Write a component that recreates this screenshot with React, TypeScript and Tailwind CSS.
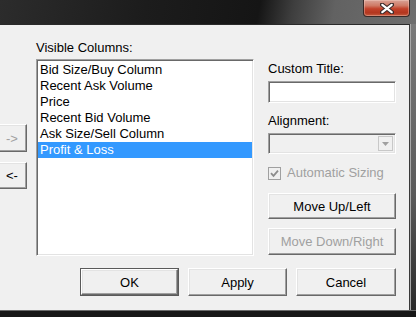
import React from "react";

const items = [
  "Bid Size/Buy Column",
  "Recent Ask Volume",
  "Price",
  "Recent Bid Volume",
  "Ask Size/Sell Column",
  "Profit & Loss",
];

// classic raised 3D button look
const btn =
  "flex items-center justify-center bg-[#f0f0f0] border border-t-white border-l-white border-b-[#696969] border-r-[#696969] shadow-[inset_-1px_-1px_0_#a0a0a0,inset_1px_1px_0_#e3e3e3] text-[13px] leading-none";

const sunken =
  "border border-t-[#a0a0a0] border-l-[#a0a0a0] border-b-white border-r-white shadow-[inset_1px_1px_0_#696969,inset_-1px_-1px_0_#e3e3e3]";

export default function App() {
  return (
    <div
      className="w-[416px] h-[317px] overflow-hidden bg-[#1a1a1a] flex flex-col text-black"
      style={{ fontFamily: '"Liberation Sans", Arial, sans-serif' }}
    >
      {/* Title bar */}
      <div className="h-[24px] flex justify-end items-start pr-[6px] bg-[linear-gradient(100deg,#2c2c2c_0%,#1c1c1c_35%,#151515_62%,#3e3e3e_70%,#626262_80%,#6e6e6e_100%)]">
        <div className="w-[47px] h-[17px] rounded-b-[4px] border border-t-0 border-[#3a2a28] bg-[linear-gradient(180deg,#d9a397_0%,#cf7a66_35%,#c2412a_55%,#b3361f_80%,#c45a3e_100%)] flex items-center justify-center shadow-[inset_0_0_0_1px_rgba(255,220,210,0.35)]">
          <svg width="14" height="11" viewBox="0 0 14 11">
            <path d="M2 1.5 L12 9.5 M12 1.5 L2 9.5" stroke="#3b2a2a" strokeWidth="4.2" strokeLinecap="round" />
            <path d="M2.3 1.8 L11.7 9.2 M11.7 1.8 L2.3 9.2" stroke="#ffffff" strokeWidth="2.2" strokeLinecap="round" />
          </svg>
        </div>
      </div>

      <div className="flex h-[286px]">
        {/* Client area */}
        <div className="w-[410px] h-[286px] bg-[#f0f0f0] border-t border-r border-t-[#2a2a2a] border-r-[#3a3a3a] flex flex-col">
          <div className="flex h-[243px]">
            {/* move buttons */}
            <div className="w-[36px] flex flex-col">
              <div className={`${btn} ml-[-3px] w-[30px] h-[28px] mt-[99px] text-[#a0a0a0]`}>-&gt;</div>
              <div className={`${btn} ml-[-3px] w-[30px] h-[27px] mt-[10px]`}>&lt;-</div>
            </div>

            {/* visible columns list */}
            <div className="w-[218px] flex flex-col pt-[15px]">
              <div className="h-[16px] text-[13px] leading-[16px]">Visible Columns:</div>
              <div className={`${sunken} mt-[3px] h-[197px] bg-white p-[1px] pt-[2px]`}>
                {items.map((t, i) => (
                  <div
                    key={t}
                    className={`h-[16px] pl-[2px] text-[13px] leading-[16px] whitespace-nowrap ${
                      i === items.length - 1 ? "bg-[#3399ff] text-white" : ""
                    }`}
                  >
                    {t}
                  </div>
                ))}
              </div>
            </div>

            {/* right side options */}
            <div className="ml-[14px] w-[128px] flex flex-col pt-[36px]">
              <div className="h-[16px] text-[13px] leading-[16px]">Custom Title:</div>
              <div className={`${sunken} mt-[4px] h-[22px] bg-white`} />
              <div className="mt-[10px] h-[16px] text-[13px] leading-[16px]">Alignment:</div>
              <div className={`${sunken} mt-[4px] h-[21px] bg-[#f0f0f0] flex justify-end items-center pr-[2px]`}>
                <div className="w-[15px] h-[15px] bg-[#f0f0f0] border border-[#c8c8c8] flex items-center justify-center">
                  <svg width="7" height="4" viewBox="0 0 7 4">
                    <path d="M0 0 H7 L3.5 4 Z" fill="#a0a0a0" />
                  </svg>
                </div>
              </div>
              <div className="mt-[11px] h-[16px] flex items-center gap-[6px]">
                <div className="w-[13px] h-[13px] border border-[#a0a0a0] bg-[#f0f0f0] flex items-center justify-center">
                  <svg width="9" height="9" viewBox="0 0 9 9">
                    <path d="M1 4.2 L3.5 6.8 L8 1.6" stroke="#8d8d8d" strokeWidth="1.8" fill="none" />
                  </svg>
                </div>
                <span className="text-[13px] leading-[16px] text-[#a0a0a0]">Automatic Sizing</span>
              </div>
              <div className={`${btn} mt-[12px] h-[26px]`}>Move Up/Left</div>
              <div className={`${btn} mt-[9px] h-[27px] text-[#a0a0a0]`}>Move Down/Right</div>
            </div>
          </div>

          {/* dialog buttons */}
          <div className="flex pl-[80px] gap-[9px]">
            <div className="w-[99px] h-[28px] border border-[#5a5a5a] flex">
              <div className={`${btn} flex-1`}>OK</div>
            </div>
            <div className={`${btn} w-[99px] h-[28px]`}>Apply</div>
            <div className={`${btn} w-[100px] h-[28px]`}>Cancel</div>
          </div>
        </div>

        {/* right frame */}
        <div className="w-[6px] border-l border-l-[#a8a8a8] bg-[linear-gradient(180deg,#7a7a7a_0%,#5a5a5a_60%,#2a2a2a_100%)]" />
      </div>

      {/* bottom frame */}
      <div className="h-[7px] border-t border-t-[#6a6a6a] bg-[#171717]" />
    </div>
  );
}
